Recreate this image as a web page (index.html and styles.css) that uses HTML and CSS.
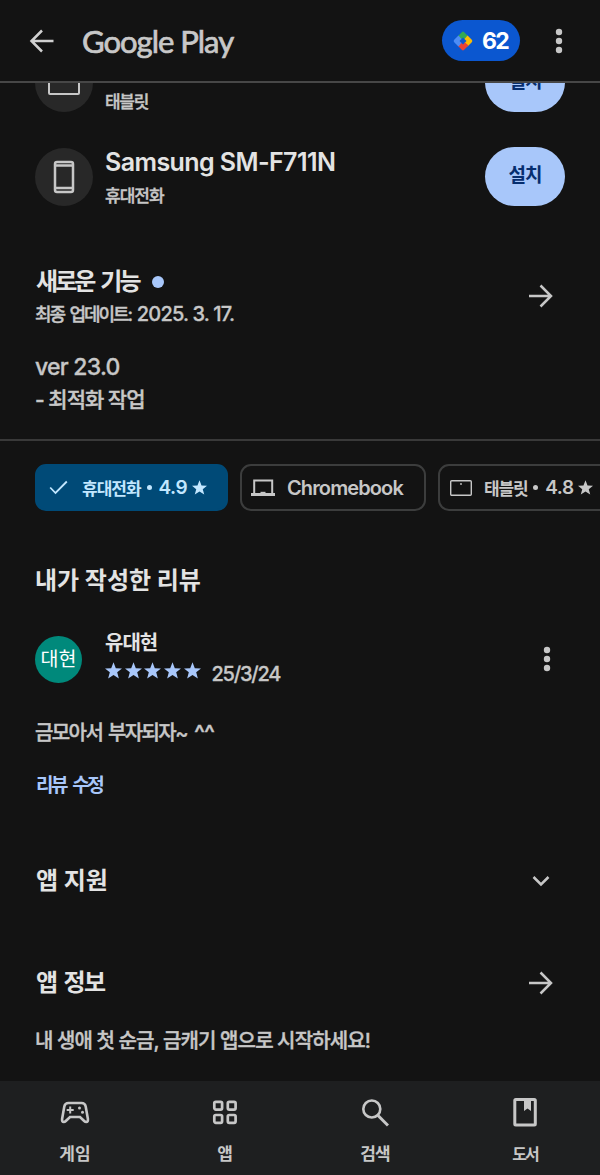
FILE: index.html
```
<!DOCTYPE html>
<html lang="ko">
<head>
<meta charset="utf-8">
<title>Google Play</title>
<link rel="stylesheet" href="styles.css">
</head>
<body>
<svg class="defs" width="0" height="0">
  <defs>
    <symbol id="star" viewBox="0.8 0.8 18.4 17.6"><path d="M10 .8l2.500 6.300 6.700.3-5.200 4.200 1.800 6.600-5.800-3.700-5.800 3.700 1.800-6.600L.8 7.400l6.700-.3z"/></symbol>
    <symbol id="forward" viewBox="0 0 26 24"><path d="M1 12h22M12.500 1.500L23 12 12.500 22.500" fill="none" stroke="currentColor" stroke-width="2.500"/></symbol>
    <symbol id="more" viewBox="0 0 8 26"><circle cx="4" cy="4" r="3.200"/><circle cx="4" cy="13" r="3.200"/><circle cx="4" cy="22" r="3.200"/></symbol>
  </defs>
</svg>
<div class="screen">
  <header class="topbar">
    <svg class="back" width="26" height="24" viewBox="0 0 26 24"><path d="M24.500 12H3M13 1.500L2.500 12 13 22.500" fill="none" stroke="currentColor" stroke-width="2.500"/></svg>
    <div class="brand">Google Play</div>
    <div class="points">
      <svg width="20" height="20" viewBox="0 0 20 20">
        <path d="M4.500 5.500L8.800 1.200q1.200-1.200 2.400 0l4.300 4.300L12 8.500 10 6.500l-2 2z" fill="#34a853"/>
        <path d="M14.500 4.500l4.300 4.300q1.200 1.200 0 2.400l-4.300 4.300L11.500 12l2-2-2-2z" fill="#fbbc04"/>
        <path d="M15.500 14.500l-4.300 4.300q-1.200 1.200-2.400 0l-4.300-4.300L8 11.500l2 2 2-2z" fill="#ea4335"/>
        <path d="M5.500 15.500l-4.300-4.300q-1.200-1.200 0-2.400l4.300-4.300L8.500 8l-2 2 2 2z" fill="#4d8df6"/>
      </svg>
      <span>62</span>
    </div>
    <svg class="menu" width="8" height="26"><use href="#more"/></svg>
  </header>

  <main class="content">
    <div class="device">
      <div class="device-icon"><svg width="32" height="24" viewBox="0 0 32 24"><rect x="1" y="1" width="30" height="22" rx="1" fill="none" stroke="currentColor" stroke-width="2"/></svg></div>
      <div class="device-info"><div class="device-name">&nbsp;</div><div class="device-type tablet">태블릿</div></div>
      <div class="install">설치</div>
    </div>
    <div class="device">
      <div class="device-icon"><svg width="22" height="34" viewBox="0 0 22 34"><rect x="2" y="2" width="18" height="30" rx="2" fill="none" stroke="currentColor" stroke-width="2.500"/><path d="M2 5.500h18M2 28h18" stroke="currentColor" stroke-width="2.500"/></svg></div>
      <div class="device-info"><div class="device-name">Samsung SM-F711N</div><div class="device-type">휴대전화</div></div>
      <div class="install">설치</div>
    </div>

    <section class="news">
      <div class="news-head">
        <div>
          <h2 class="news-title"><span>새로운 기능</span><i class="dot"></i></h2>
          <div class="updated"><span class="updated-label">최종 업데이트:</span><span class="updated-date">2025. 3. 17.</span></div>
        </div>
        <svg class="arrow" width="26" height="24"><use href="#forward"/></svg>
      </div>
      <div class="version">ver 23.0</div>
      <div class="change">- 최적화 작업</div>
    </section>

    <div class="chips">
      <div class="chip selected">
        <svg class="check" width="19" height="15" viewBox="0 0 19 15"><path d="M1.200 7.500l5.300 5.500L17.800 1.500" fill="none" stroke="currentColor" stroke-width="1.800"/></svg>
        <span class="chip-ko">휴대전화</span><i class="bullet"></i><span class="score">4.9</span><svg class="chip-star" width="15" height="15"><use href="#star"/></svg>
      </div>
      <div class="chip laptop">
        <svg width="24" height="18" viewBox="0 0 24 18"><path d="M3.200 15V1.500h18V15" fill="none" stroke="currentColor" stroke-width="2"/><path d="M0 14h24v3H0z"/><path d="M9.500 12.800h5v2h-5z"/></svg>
        <span class="chip-en">Chromebook</span>
      </div>
      <div class="chip pad">
        <svg width="22" height="16" viewBox="0 0 22 16"><rect x=".7" y=".7" width="20.600" height="14.600" rx="1" fill="none" stroke="currentColor" stroke-width="1.400"/><circle cx="11" cy="4" r=".9"/></svg>
        <span class="chip-ko">태블릿</span><i class="bullet"></i><span class="score">4.8</span><svg class="chip-star" width="15" height="15"><use href="#star"/></svg>
      </div>
    </div>

    <section class="review">
      <h2 class="review-title">내가 작성한 리뷰</h2>
      <div class="reviewer">
        <div class="avatar">대현</div>
        <div class="who">
          <div class="name">유대현</div>
          <div class="rating">
            <svg width="17" height="17"><use href="#star"/></svg><svg width="17" height="17"><use href="#star"/></svg><svg width="17" height="17"><use href="#star"/></svg><svg width="17" height="17"><use href="#star"/></svg><svg width="17" height="17"><use href="#star"/></svg>
            <span class="date">25/3/24</span>
          </div>
        </div>
        <svg class="more" width="8" height="26"><use href="#more"/></svg>
      </div>
      <p class="comment"><span>금모아서 부자되자~</span><span class="smile">^^</span></p>
      <div class="edit">리뷰 수정</div>
    </section>

    <section class="row support">
      <h2>앱 지원</h2>
      <svg class="chevron" width="18" height="12" viewBox="0 0 18 12"><path d="M1.500 2L9 9.500 16.500 2" fill="none" stroke="currentColor" stroke-width="2.500"/></svg>
    </section>
    <section class="row about">
      <h2>앱 정보</h2>
      <svg class="arrow" width="26" height="24"><use href="#forward"/></svg>
    </section>
    <p class="summary">내 생애 첫 순금, 금캐기 앱으로 시작하세요!</p>
  </main>

  <nav class="tabs">
    <div class="tab">
      <svg width="30" height="34" viewBox="0 0 30 34"><path d="M8.500 8h13q3.500 0 4.200 3.500l2.200 12.500q.3 3-1.700 3-1 0-2-1l-4.200-4H10l-4.200 4q-1 1-2 1-2 0-1.700-3l2.200-12.500Q5 8 8.500 8z" fill="none" stroke="currentColor" stroke-width="2.600"/><path d="M10.200 11.500v7M6.700 15h7" stroke="currentColor" stroke-width="2"/><circle cx="19.500" cy="13" r="1.500"/><circle cx="22.500" cy="17.300" r="1.500"/></svg>
      <span class="t-game">게임</span>
    </div>
    <div class="tab">
      <svg width="26" height="34" viewBox="0 0 26 34"><g fill="none" stroke="currentColor" stroke-width="2.700"><rect x="2.300" y="6.800" width="7.800" height="7.800" rx="1.500"/><rect x="15.800" y="6.800" width="7.800" height="7.800" rx="1.500"/><rect x="2.300" y="20" width="7.800" height="7.800" rx="1.500"/><rect x="15.800" y="20" width="7.800" height="7.800" rx="1.500"/></g></svg>
      <span>앱</span>
    </div>
    <div class="tab">
      <svg width="28" height="34" viewBox="0 0 28 34"><g fill="none" stroke="currentColor"><circle cx="10.800" cy="14" r="8.500" stroke-width="2.600"/><path d="M16.500 20L27 30.500" stroke-width="3"/></g></svg>
      <span class="t-search">검색</span>
    </div>
    <div class="tab">
      <svg width="26" height="34" viewBox="0 0 26 34"><rect x="2.800" y="4.400" width="20.500" height="25.500" rx="1" fill="none" stroke="currentColor" stroke-width="3"/><path d="M12 4.500h7V16l-3.500-2.500L12 16z"/></svg>
      <span class="t-book">도서</span>
    </div>
  </nav>
</div>
</body>
</html>
```
FILE: styles.css
```
* { box-sizing: border-box; }
body { margin: 0; background: #131313; }
h2, p { margin: 0; }
svg { display: block; flex: none; fill: currentColor; }
.defs { position: absolute; }

.screen {
  width: 600px;
  height: 1175px;
  display: flex;
  flex-direction: column;
  overflow: hidden;
  background: #131313;
  color: #c7c7c7;
  font-family: "Inter", "Noto Sans CJK KR", sans-serif;
  font-weight: 500;
  white-space: nowrap;
}

.topbar {
  height: 83px;
  flex: none;
  display: flex;
  align-items: center;
  padding: 0 37px 0 29px;
  border-bottom: 2px solid #474747;
}
.back { color: #d0d0d0; }
.brand {
  margin-left: 27px;
  width: 360px;
  font: 400 31px/40px "Lato", sans-serif;
  letter-spacing: -1px;
  color: #c8c8c8;
  -webkit-text-stroke: 0.7px #c8c8c8;
}
.points {
  width: 78px;
  height: 41px;
  border-radius: 21px;
  background: #0b57d0;
  color: #fff;
  display: flex;
  align-items: center;
  padding-left: 11px;
  gap: 9px;
  font-size: 23px;
  font-weight: 700;
  letter-spacing: -1.8px;
}
.menu { margin-left: auto; }

.content { flex: 1; min-height: 0; overflow: hidden; }

.device { height: 94px; display: flex; align-items: center; padding: 0 35px; }
.device:first-child { margin-top: -47px; }
.device-icon {
  width: 58px;
  height: 58px;
  border-radius: 50%;
  background: #282828;
  display: flex;
  align-items: center;
  justify-content: center;
}
.device-info { margin-left: 12px; flex: 1; padding-top: 2px; }
.device-name { font-size: 25px; line-height: 36px; font-weight: 600; letter-spacing: -0.58px; color: #e3e3e3; }
.device-type { font-size: 17px; line-height: 32px; letter-spacing: -1px; -webkit-text-stroke: 0.4px; }
.tablet { letter-spacing: -1.3px; }
.install {
  width: 80px;
  height: 59px;
  border-radius: 30px;
  background: #a8c7fa;
  color: #062e6f;
  font-size: 19px;
  font-weight: 700;
  letter-spacing: -1px;
  line-height: 58px;
  text-align: center;
  margin-top: -1px;
}

h2 { font-size: 24px; line-height: 34px; font-weight: 700; color: #e3e3e3; }
.news { padding: 41px 0 23px 35px; border-bottom: 2px solid #393939; }
.news-head { display: flex; align-items: center; justify-content: space-between; padding-right: 46px; }
.news-title { display: flex; align-items: center; gap: 13px; letter-spacing: -2.9px; word-spacing: 4px; }
.news-title span { margin-left: 1px; }
.dot { width: 12px; height: 12px; border-radius: 50%; background: #a8c7fa; }
.updated { display: flex; gap: 6px; height: 52px; line-height: 31px; font-size: 18px; }
.news-head .arrow { margin-bottom: 25px; }
.updated-label { letter-spacing: -2.1px; word-spacing: 3px; -webkit-text-stroke: 0.4px; }
.updated-date { font-size: 20px; letter-spacing: -0.82px; -webkit-text-stroke: 0.3px; }
.version { font-size: 23px; line-height: 32px; letter-spacing: -0.75px; -webkit-text-stroke: 0.3px; }
.change { font-size: 21px; line-height: 33px; letter-spacing: -1px; -webkit-text-stroke: 0.4px; }

.chips { display: flex; gap: 12px; padding: 23px 0 0 35px; }
.chip {
  height: 47px;
  flex: none;
  display: flex;
  align-items: center;
  border: 2px solid #3c3d3d;
  border-radius: 11px;
}
.chip.selected { width: 193px; padding-left: 12px; background: #004a77; border-color: #004a77; color: #c2e7ff; }
.chip.laptop { width: 186px; padding-left: 9px; gap: 12px; }
.chip.pad { width: 210px; padding-left: 10px; }
.chip-ko { font-size: 17px; font-weight: 700; letter-spacing: -1px; margin-left: 14px; }
.chip.pad .chip-ko { margin-left: 12px; letter-spacing: -1.2px; }
.chip-en { font-size: 20px; font-weight: 600; letter-spacing: -0.88px; }
.bullet { width: 5px; height: 5px; border-radius: 50%; background: currentColor; margin: 0 7px 0 6px; }
.score { font-size: 19px; font-weight: 600; width: 27px; letter-spacing: -0.5px; }
.chip-star { margin-left: 6px; }

.review { padding: 53px 0 0 35px; }
.reviewer { display: flex; align-items: center; height: 66px; margin-top: 28px; padding-right: 49px; }
.avatar {
  width: 47px;
  height: 47px;
  border-radius: 50%;
  background: #00897b;
  color: #fff;
  font-size: 19.5px;
  font-weight: 400;
  line-height: 46px;
  text-align: center;
}
.who { margin-left: 23px; flex: 1; padding-bottom: 10px; }
.name { font-size: 20px; line-height: 30px; padding-top: 2px; font-weight: 700; letter-spacing: -1px; color: #e3e3e3; }
.rating { display: flex; align-items: center; gap: 2.7px; height: 24px; color: #a8c7fa; }
.date { margin: 8px 0 0 8px; font-size: 20px; letter-spacing: -1.2px; color: #c7c7c7; -webkit-text-stroke: 0.3px; }
.comment { margin-top: 25px; display: flex; gap: 7px; font-size: 20px; line-height: 32px; letter-spacing: -1.6px; word-spacing: 2px; -webkit-text-stroke: 0.4px; }
.smile { font-size: 23px; letter-spacing: -0.8px; }
.edit { margin-top: 20px; padding-left: 1px; font-size: 19px; line-height: 34px; font-weight: 700; letter-spacing: -2.4px; word-spacing: 4px; color: #a8c7fa; }

.row { display: flex; align-items: center; justify-content: space-between; padding: 0 46px 0 36px; }
.support { margin-top: 61px; padding-right: 50px; }
.about { margin-top: 68px; }
.about h2 { letter-spacing: -1.6px; word-spacing: 3px; }
.summary { margin-top: 24px; padding-left: 35px; font-size: 20px; line-height: 34px; letter-spacing: -0.87px; -webkit-text-stroke: 0.4px; }

.tabs { height: 94px; flex: none; display: flex; background: #1e1f20; }
.tab { flex: 1; display: flex; flex-direction: column; align-items: center; padding-top: 14px; font-size: 17px; line-height: 26px; font-weight: 700; gap: 12px; }
.t-search { letter-spacing: -1px; }
.t-book { font-size: 16px; letter-spacing: -2px; }
```
